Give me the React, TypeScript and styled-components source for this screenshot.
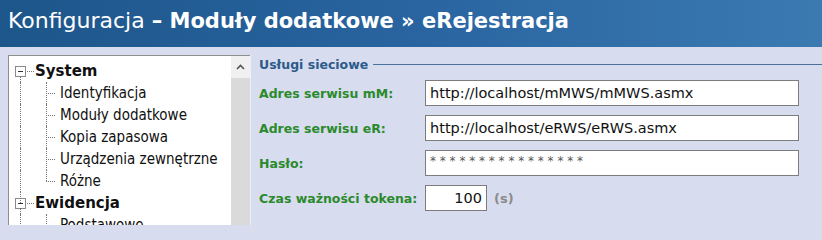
import * as React from 'react';
import styled, { createGlobalStyle } from 'styled-components';

const GlobalStyle = createGlobalStyle`
  html, body {
    margin: 0;
    padding: 0;
    background: #d7dcef;
    overflow: hidden;
  }
`;

const Root = styled.div`
  width: 822px;
  height: 225px;
  overflow: hidden;
  font-family: 'DejaVu Sans Condensed', 'DejaVu Sans', sans-serif;
`;

const TitleBar = styled.div`
  height: 47px;
  box-sizing: border-box;
  padding: 8px 0 0 8px;
  background: linear-gradient(to right, #1d568a 0%, #2964a0 50%, #3b7ab1 100%);
  color: #ffffff;
  font-family: 'DejaVu Sans', sans-serif;
  font-size: 22px;
  white-space: nowrap;
`;

const TitleStrong = styled.b`
  font-weight: 700;
  font-size: 21px;
`;

const Main = styled.div`
  display: flex;
  padding: 8px 0 0 8px;
`;

const TreePanel = styled.div`
  display: flex;
  width: 242px;
  height: 180px;
  box-sizing: border-box;
  background: #ffffff;
  border-top: 1px solid #8e8e8e;
  border-left: 1px solid #8e8e8e;
`;

const TreeList = styled.div`
  flex: 1;
  padding-top: 4px;
`;

const TreeRow = styled.div<{ $level: number }>`
  position: relative;
  height: 22px;
  display: flex;
  align-items: center;
  padding-left: ${(p) => (p.$level === 0 ? 26 : 51)}px;
  font-size: 15px;
  font-weight: ${(p) => (p.$level === 0 ? 700 : 400)};
  font-family: ${(p) =>
    p.$level === 0 ? "'DejaVu Sans', sans-serif" : "'DejaVu Sans Condensed', sans-serif"};
  color: #101010;
  white-space: nowrap;
`;

const PlusBox = styled.span`
  position: absolute;
  left: 6px;
  top: 6px;
  width: 9px;
  height: 9px;
  border: 1px solid #8a8a8a;
  background: #fff;
  &::before {
    content: '';
    position: absolute;
    left: 2px;
    top: 4px;
    width: 5px;
    height: 1px;
    background: #333;
  }
  &::after {
    content: '';
    position: absolute;
    left: 11px;
    top: 4px;
    width: 7px;
    border-top: 1px dotted #777;
  }
`;

const VLine = styled.span<{ $x: number; $half?: boolean; $top?: number }>`
  position: absolute;
  left: ${(p) => p.$x}px;
  top: ${(p) => p.$top ?? 0}px;
  height: ${(p) => (p.$half ? 11 : 22 - (p.$top ?? 0))}px;
  border-left: 1px dotted #777;
`;

const HLine = styled.span`
  position: absolute;
  left: 37px;
  top: 11px;
  width: 9px;
  border-top: 1px dotted #777;
`;

const Scrollbar = styled.div`
  width: 19px;
  display: flex;
  flex-direction: column;
  background: #dadada;
`;

const ScrollButton = styled.div`
  height: 22px;
  background: #f0f0f0;
  display: flex;
  align-items: center;
  justify-content: center;
`;

const Content = styled.div`
  flex: 1;
  padding: 1px 0 0 8px;
  border-left: 1px solid #eef0f8;
`;

const GroupHeader = styled.div`
  display: flex;
  align-items: center;
  gap: 5px;
  height: 16px;
  color: #2c5b8a;
  font-weight: 700;
  font-size: 12.5px;
  font-family: 'DejaVu Sans', sans-serif;
  &::after {
    content: '';
    flex: 1;
    border-top: 1px solid #4a72a0;
  }
`;

const Form = styled.div`
  display: grid;
  grid-template-columns: 166px auto;
  row-gap: 9px;
  margin-top: 8px;
  align-items: center;
`;

const Label = styled.label`
  color: #2b8a2b;
  font-weight: 700;
  font-size: 12.5px;
  font-family: 'DejaVu Sans', sans-serif;
  white-space: nowrap;
`;

const Field = styled.div<{ $width: number; $align?: string }>`
  width: ${(p) => p.$width}px;
  height: 26px;
  box-sizing: border-box;
  border: 1px solid #7c7c7c;
  background: #ffffff;
  display: flex;
  align-items: center;
  justify-content: ${(p) => (p.$align === 'right' ? 'flex-end' : 'flex-start')};
  padding: 0 4px;
  font-size: 14.5px;
  font-family: 'DejaVu Sans', sans-serif;
  color: #111;
  white-space: nowrap;
`;

const Masked = styled.span`
  font-size: 12px;
  letter-spacing: 3.8px;
  color: #555;
  margin-top: -5px;
`;

const InlineGroup = styled.div`
  display: flex;
  align-items: center;
  gap: 7px;
`;

const Unit = styled.span`
  color: #8a8a8a;
  font-weight: 700;
  font-size: 13px;
  font-family: 'DejaVu Sans', sans-serif;
`;

type TreeItem = { label: string; level: number; last?: boolean };

const treeItems: TreeItem[] = [
  { label: 'System', level: 0 },
  { label: 'Identyfikacja', level: 1 },
  { label: 'Moduły dodatkowe', level: 1 },
  { label: 'Kopia zapasowa', level: 1 },
  { label: 'Urządzenia zewnętrzne', level: 1 },
  { label: 'Różne', level: 1, last: true },
  { label: 'Ewidencja', level: 0 },
  { label: 'Podstawowe', level: 1 },
];

function Tree() {
  return (
    <TreeList>
      {treeItems.map((item, i) => (
        <TreeRow key={i} $level={item.level}>
          {item.level === 0 ? (
            <>
              <PlusBox />
              <VLine $x={11} $top={16} />
              {i > 0 && <VLine $x={11} $half />}
            </>
          ) : (
            <>
              <VLine $x={11} />
              <VLine $x={37} $half={item.last} />
              <HLine />
            </>
          )}
          {item.label}
        </TreeRow>
      ))}
    </TreeList>
  );
}

export default function App() {
  return (
    <Root>
      <GlobalStyle />
      <TitleBar>
        Konfiguracja <TitleStrong>– Moduły dodatkowe » eRejestracja</TitleStrong>
      </TitleBar>
      <Main>
        <TreePanel>
          <Tree />
          <Scrollbar>
            <ScrollButton>
              <svg width="9" height="6" viewBox="0 0 9 6">
                <path d="M1 5 L4.5 1.5 L8 5" fill="none" stroke="#555" strokeWidth="1.6" />
              </svg>
            </ScrollButton>
          </Scrollbar>
        </TreePanel>
        <Content>
          <GroupHeader>Usługi sieciowe</GroupHeader>
          <Form>
            <Label>Adres serwisu mM:</Label>
            <Field $width={374}>http://localhost/mMWS/mMWS.asmx</Field>
            <Label>Adres serwisu eR:</Label>
            <Field $width={374}>http://localhost/eRWS/eRWS.asmx</Field>
            <Label>Hasło:</Label>
            <Field $width={374}>
              <Masked>****************</Masked>
            </Field>
            <Label>Czas ważności tokena:</Label>
            <InlineGroup>
              <Field $width={62} $align="right">100</Field>
              <Unit>(s)</Unit>
            </InlineGroup>
          </Form>
        </Content>
      </Main>
    </Root>
  );
}
